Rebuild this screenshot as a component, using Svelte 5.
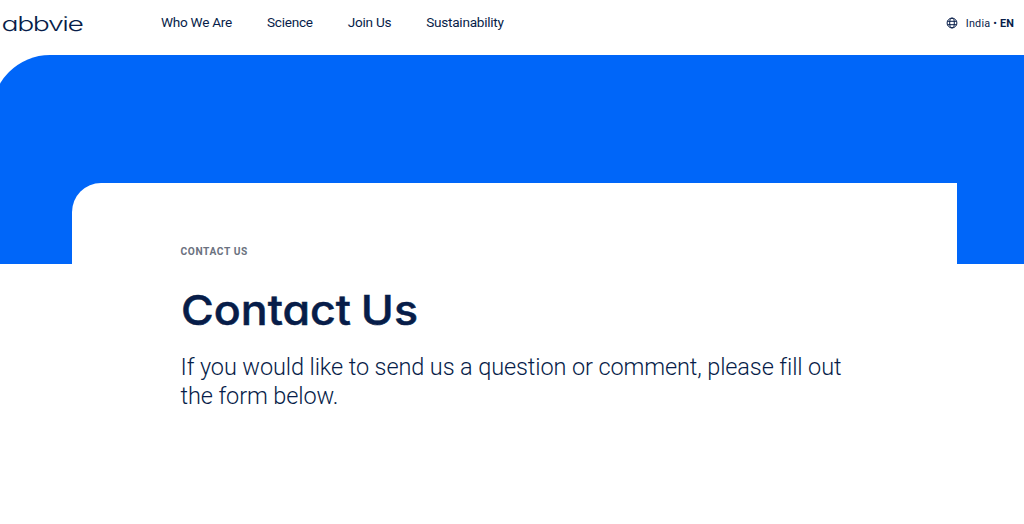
<script lang="ts">
	const links = ['Who We Are', 'Science', 'Join Us', 'Sustainability'];
</script>

<header class="site-header">
	<a class="logo" href="#home" aria-label="abbvie">
		<svg width="84" height="24" viewBox="0 0 84 24">
			<text x="0.5" y="19.8" textLength="81" lengthAdjust="spacingAndGlyphs">abbvie</text>
		</svg>
	</a>
	<nav class="main-nav">
		{#each links as link}
			<a href="#{link}">{link}</a>
		{/each}
	</nav>
	<a class="locale" href="#locale">
		<svg class="globe" width="12" height="12" viewBox="0 0 12 12">
			<circle cx="6" cy="6" r="4.9" />
			<ellipse cx="6" cy="6" rx="2.3" ry="4.9" />
			<path d="M1.5 4.3h9M1.5 7.7h9" />
		</svg>
		<span>India • <strong>EN</strong></span>
	</a>
</header>

<main>
	<div class="hero">
		<div class="panel">
			<p class="eyebrow">Contact Us</p>
			<h1>Contact Us</h1>
			<p class="intro">If you would like to send us a question or comment, please fill out the form below.</p>
		</div>
	</div>
</main>

<style>
	:global(body) {
		background: #fff;
	}

	.site-header {
		display: flex;
		align-items: center;
		box-sizing: border-box;
		height: 55px;
		padding: 0 10px 9px 1px;
		font-family: Roboto, sans-serif;
		color: #071d49;
	}

	a {
		color: inherit;
		text-decoration: none;
	}

	.logo {
		display: flex;
		width: 160px;
	}

	.logo text {
		font-family: Inter, sans-serif;
		font-size: 20px;
		font-weight: 300;
		font-feature-settings: 'cv11';
		letter-spacing: -1px;
		fill: #071d49;
	}

	.main-nav {
		display: flex;
		gap: 35.1px;
		padding-bottom: 2px;
		font-size: 13.6px;
		letter-spacing: -0.27px;
	}

	.locale {
		display: flex;
		align-items: center;
		gap: 8px;
		margin-left: auto;
		font-size: 10.8px;
		letter-spacing: 0.2px;
	}

	.globe {
		fill: none;
		stroke: #071d49;
		stroke-width: 1;
	}

	main {
		min-height: 469px;
	}

	.hero {
		box-sizing: border-box;
		height: 209px;
		margin-left: -8px;
		padding: 128px 67px 0 80px;
		background: #0066f9;
		border-top-left-radius: 58px;
	}

	.panel {
		box-sizing: border-box;
		height: 320px;
		padding: 61px 100px 0 108.5px;
		background: #fff;
		border-top-left-radius: 29px;
		color: #071d49;
	}

	.eyebrow {
		margin: 0;
		font: 700 10.2px/15px Roboto, sans-serif;
		letter-spacing: 0.6px;
		text-transform: uppercase;
		color: #6b7280;
	}

	h1 {
		margin: 25px 0 0;
		font: 500 41.5px/52px Inter, sans-serif;
		font-feature-settings: 'cv11';
		word-spacing: -2px;
		-webkit-text-stroke: 0.5px #071d49;
		transform: scaleX(1.077);
		transform-origin: left;
	}

	.intro {
		margin: 17px 0 0;
		font: 300 23.5px/29px Roboto, sans-serif;
		letter-spacing: -0.11px;
	}
</style>
